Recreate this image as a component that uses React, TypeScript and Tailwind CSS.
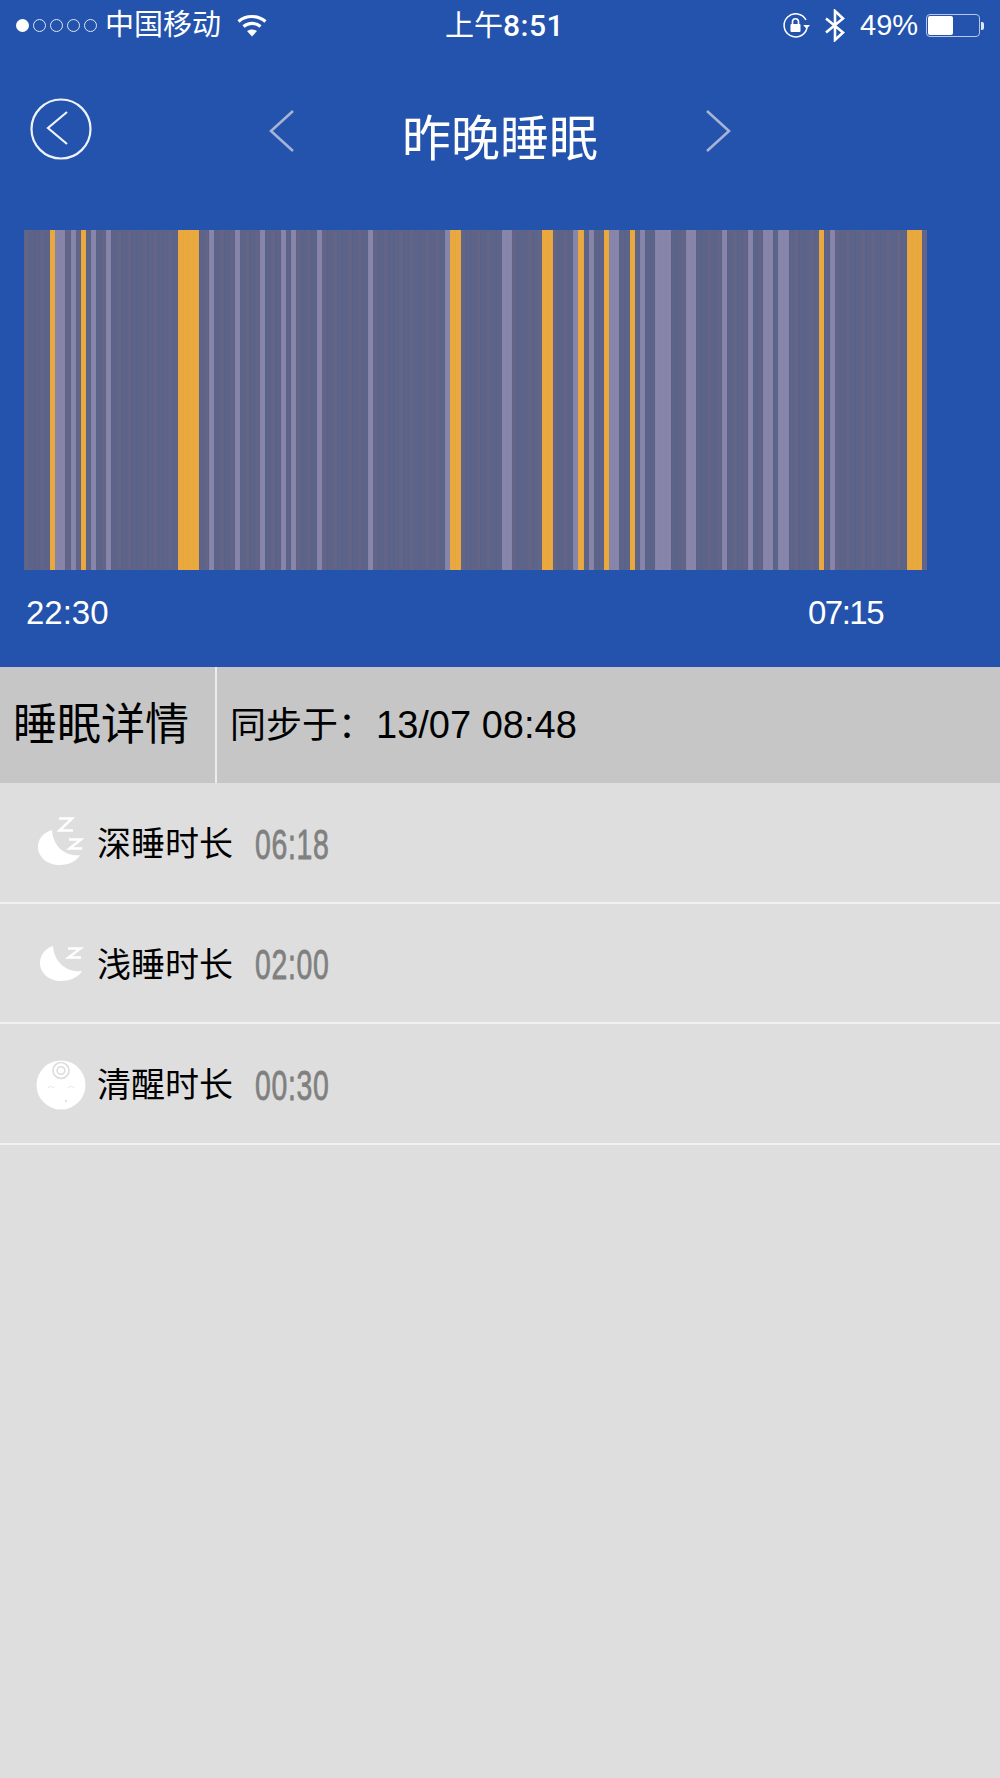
const orange: [number, number][] = [[50,55],[81,86],[178,199],[450,461],[542,553],[578,584],[604,609],[630,635],[819,824],[907,922]];
const light: [number, number][] = [[55,65],[71,76],[91,96],[106,111],[209,214],[235,240],[260,265],[281,286],[291,296],[317,322],[368,373],[445,450],[502,512],[573,578],[589,594],[609,619],[640,645],[655,671],[686,696],[722,727],[748,753],[763,773],[778,789],[830,835]];
const stripes = Array.from({ length: 176 }, (_, i) => i);

function Chart() {
  return (
    <svg width="903" height="340" viewBox="24 0 903 340" className="block">
      <rect x="24" y="0" width="903" height="340" fill="#5f6488" />
      {stripes.map((i) => (
        <rect key={i} x={24 + i * 5.13} y="0" width="5.13" height="340" fill={(i * 7) % 5 < 2 ? "#626587" : "#5d648a"} />
      ))}
      {light.map(([a, b]) => (
        <rect key={a} x={a} y="0" width={b - a} height="340" fill="#8785a9" />
      ))}
      {orange.map(([a, b]) => (
        <rect key={a} x={a} y="0" width={b - a} height="340" fill="#e9a93f" />
      ))}
      {stripes.map((i) => (
        <rect key={i} x={24 + i * 5.13} y="0" width="1" height="340" fill="#000" fillOpacity="0.02" />
      ))}
    </svg>
  );
}

function Wifi() {
  return (
    <svg width="30" height="23" viewBox="0 0 30 23" fill="none" stroke="#fff" strokeWidth="3.2">
      <path d="M1.5 7.5C9 .8 21 .8 28.5 7.5" />
      <path d="M6.5 12.5c5-4.2 12-4.2 17 0" />
      <path d="M15 22.5l-5-5.4c3-2.2 7-2.2 10 0z" fill="#fff" stroke="none" />
    </svg>
  );
}

function RotLock() {
  return (
    <svg width="28" height="26" viewBox="0 0 28 26" fill="none" stroke="#fff" strokeWidth="1.5">
      <path d="M24 15a11.6 11.6 0 1 1-1-8" />
      <path d="M27 12l-3.4 4-3.4-4z" fill="#fff" stroke="none" />
      <rect x="7.5" y="11" width="10" height="8" rx="1" fill="#fff" stroke="none" />
      <path d="M9.5 11V8.7a3 3 0 0 1 6 0V11" strokeWidth="1.6" />
    </svg>
  );
}

function Bluetooth() {
  return (
    <svg width="20" height="33" viewBox="0 0 20 33" fill="none" stroke="#fff" strokeWidth="2.6">
      <path d="M1 9.5L18 23.5 10 31V2l8 7.5L1 23.5" />
    </svg>
  );
}

function Battery() {
  return (
    <div className="flex items-center">
      <div className="w-[54px] h-[23px] rounded-[4px] border border-[#b9c8e8] p-[1px]">
        <div className="w-[25px] h-full rounded-[2px] bg-white" />
      </div>
      <div className="w-[3px] h-[8px] ml-[1px] rounded-r-[2px] bg-[#dfe6f5]" />
    </div>
  );
}

function Chevron({ right }: { right?: boolean }) {
  return (
    <svg width="26" height="44" viewBox="0 0 26 44" fill="none" stroke="#a6b3d4" strokeWidth="2.6">
      <path d={right ? "M2 2l22 20L2 42" : "M24 2L2 22l22 20"} />
    </svg>
  );
}

function Moon2() {
  return (
    <svg width="50" height="50" viewBox="0 0 50 50" fill="none" className="overflow-visible">
      <path d="M16 11C6 14 2 21 2 28C2 38 11 46 24 46C33 46 41 42 44 36C30 38 17 28 16 11z" fill="#fff" />
      <path d="M23-.5h13L23.500 11.500H37" stroke="#fff" strokeWidth="2.500" />
      <path d="M33 20.500h12L33.500 29.500H46" stroke="#fff" strokeWidth="2.400" />
    </svg>
  );
}

function Moon1() {
  return (
    <svg width="50" height="50" viewBox="0 0 50 50" fill="none" className="overflow-visible">
      <path d="M17 6C8 9 4 16 4 23C4 33 13 41 25 41C34 41 43 37 46 31C32 33 18 23 17 6z" fill="#fff" />
      <path d="M32 8.500h12.500L32.500 17.500H45" stroke="#fff" strokeWidth="2.400" />
    </svg>
  );
}

function Face() {
  return (
    <svg width="50" height="50" viewBox="0 0 50 50" fill="none">
      <circle cx="25" cy="25" r="24.500" fill="#fff" />
      <circle cx="25" cy="10.500" r="8" stroke="#dcdcdc" strokeWidth="1.6" />
      <circle cx="25" cy="10.500" r="3.800" stroke="#dcdcdc" strokeWidth="1.600" />
      <path d="M12 28c1.500-2 4-2 6 0M32 28c1.500-2 4-2 6 0" stroke="#e8e8e8" strokeWidth="1.200" />
      <circle cx="30" cy="41" r="1.200" fill="#e4e4e4" />
    </svg>
  );
}

function Row({ icon, label, time }: { icon: React.ReactNode; label: string; time: string }) {
  return (
    <div className="flex items-center h-[120.500px] border-b-2 border-[#f1f1f1] pl-[36px] pt-[4px]">
      <div className="w-[50px] h-[50px] shrink-0">{icon}</div>
      <div className="ml-[11px] w-[158px] text-[34px] text-black leading-none">{label}</div>
      <div className="text-[43px] leading-none tracking-[1px] text-[#808080] [-webkit-text-stroke:0.8px_#808080] origin-left scale-x-[0.66] whitespace-nowrap">{time}</div>
    </div>
  );
}

export default function App() {
  return (
    <div className="w-[1000px] h-[1778px] bg-[#dedede] overflow-hidden font-['Liberation_Sans','Noto_Sans_CJK_SC',sans-serif]">
      <div className="bg-[#2353ac] h-[667px] text-white">
        <div className="flex items-center h-[50px] pl-[16px] pt-[1px] text-[29px] leading-none">
          <div className="flex items-center gap-[4px]">
            <span className="w-[13px] h-[13px] rounded-full bg-white" />
            <span className="w-[13px] h-[13px] rounded-full border border-[#dfe6f5]" />
            <span className="w-[13px] h-[13px] rounded-full border border-[#dfe6f5]" />
            <span className="w-[13px] h-[13px] rounded-full border border-[#dfe6f5]" />
            <span className="w-[13px] h-[13px] rounded-full border border-[#dfe6f5]" />
          </div>
          <span className="ml-[8px]">中国移动</span>
          <span className="ml-[16px] mt-[-1px]"><Wifi /></span>
          <span className="ml-[178px] whitespace-nowrap">上午<span className="font-['Roboto'] font-medium text-[30px] tracking-[0.5px]">8:51</span></span>
          <span className="ml-[219px]"><RotLock /></span>
          <span className="ml-[14px]"><Bluetooth /></span>
          <span className="ml-[15px]">49%</span>
          <span className="ml-[8px]"><Battery /></span>
        </div>
        <div className="relative flex items-center justify-center h-[110px] mt-[26px] gap-[106px]">
          <svg width="62" height="62" viewBox="0 0 62 62" fill="none" stroke="#eef2fa" strokeWidth="2.200" className="absolute left-[30px] top-[22px]">
            <circle cx="31" cy="31" r="29.500" />
            <path d="M37 14L18 30l19 16" />
          </svg>
          <Chevron />
          <h1 className="text-[49px] font-normal leading-none w-[198px] mt-[17px] text-center whitespace-nowrap">昨晚睡眠</h1>
          <Chevron right />
        </div>
        <div className="mt-[44px] pl-[24px]"><Chart /></div>
        <div className="flex mt-[24px] text-[33px] leading-[38px]">
          <span className="ml-[26px] w-[782px]">22:30</span>
          <span className="tracking-[-1.500px]">07:15</span>
        </div>
      </div>
      <div className="flex items-center h-[116px] bg-[#c6c6c6] text-black">
        <div className="w-[217px] pl-[13px] text-[44px] leading-none border-r-2 border-[#ececec] h-full flex items-center whitespace-nowrap">睡眠详情</div>
        <div className="pl-[13px] text-[36px] leading-none whitespace-nowrap">同步于：<span className="text-[38px] ml-[2px]">13/07 08:48</span></div>
      </div>
      <Row icon={<Moon2 />} label="深睡时长" time="06:18" />
      <Row icon={<Moon1 />} label="浅睡时长" time="02:00" />
      <Row icon={<Face />} label="清醒时长" time="00:30" />
    </div>
  );
}
